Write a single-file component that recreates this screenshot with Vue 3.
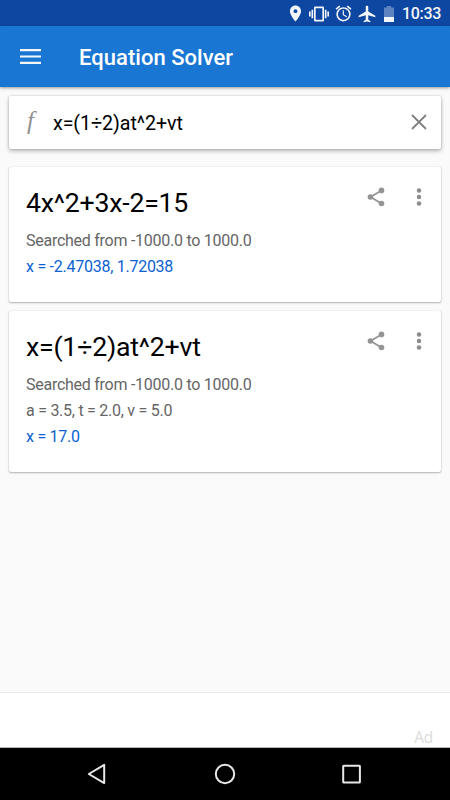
<script setup>
const results = [
  {
    equation: '4x^2+3x-2=15',
    lines: ['Searched from -1000.0 to 1000.0'],
    answer: 'x = -2.47038, 1.72038',
  },
  {
    equation: 'x=(1÷2)at^2+vt',
    lines: ['Searched from -1000.0 to 1000.0', 'a = 3.5, t = 2.0, v = 5.0'],
    answer: 'x = 17.0',
  },
]
</script>

<template>
  <div class="screen">
    <div class="status">
      <svg class="pin" viewBox="0 0 24 24"><path d="M12 2C8.13 2 5 5.13 5 9c0 5.25 7 13 7 13s7-7.75 7-13c0-3.87-3.13-7-7-7zm0 9.5a2.5 2.5 0 0 1 0-5 2.5 2.5 0 0 1 0 5z" /></svg>
      <svg class="vibrate" viewBox="0 0 24 24"><path d="M0 15h2V9H0v6zm3 2h2V7H3v10zm19-8v6h2V9h-2zm-3 8h2V7h-2v10zM16.500 3h-9C6.670 3 6 3.670 6 4.500v15c0 .83.67 1.500 1.500 1.500h9c.83 0 1.500-.67 1.500-1.500v-15c0-.83-.67-1.500-1.500-1.500zM16 19H8V5h8v14z" /></svg>
      <svg class="alarm" viewBox="0 0 24 24"><path d="M22 5.720l-4.600-3.860-1.290 1.530 4.600 3.860L22 5.720zM7.880 3.390L6.600 1.860 2 5.710l1.290 1.530 4.590-3.850zM12.500 8H11v6l4.750 2.850.75-1.230-4-2.370V8zM12 4c-4.970 0-9 4.030-9 9s4.020 9 9 9a9 9 0 0 0 0-18zm0 16c-3.870 0-7-3.130-7-7s3.130-7 7-7 7 3.130 7 7-3.130 7-7 7z" /></svg>
      <svg class="plane" viewBox="0 0 24 24"><path d="M22 16v-2l-8.500-5V3.500C13.500 2.670 12.830 2 12 2s-1.500.67-1.500 1.500V9L2 14v2l8.500-2.500V19L8 20.500V22l4-1 4 1v-1.500L13.500 19v-5.500L22 16z" /></svg>
      <svg class="battery" viewBox="0 0 12 18"><path fill-opacity=".35" d="M1 2.500h2.800V1h4.400v1.500H11V12H1z" /><path d="M1 12h10v5H1z" /></svg>
      <span class="clock">10:33</span>
    </div>

    <header class="appbar">
      <svg class="menu" viewBox="0 0 22 16"><path d="M0 0h21v2.200H0zM0 6.400h21v2.200H0zM0 12.800h21V15H0z" /></svg>
      <h1>Equation Solver</h1>
    </header>

    <main>
      <div class="search">
        <span class="fn">f</span>
        <span class="query">x=(1÷2)at^2+vt</span>
        <svg class="close" viewBox="0 0 16 16"><path d="M1 1l14 14M15 1L1 15" /></svg>
      </div>

      <article v-for="r in results" :key="r.equation" class="card">
        <div class="body">
          <h2>{{ r.equation }}</h2>
          <p v-for="l in r.lines" :key="l">{{ l }}</p>
          <p class="answer">{{ r.answer }}</p>
        </div>
        <div class="actions">
          <svg class="share" viewBox="0 0 18 20"><path d="M14.500 3.500L3.500 10l11 6.500" /><circle cx="3.400" cy="10" r="2.800" /><circle cx="14.500" cy="3.400" r="2.800" /><circle cx="14.500" cy="16.500" r="2.800" /></svg>
          <svg class="more" viewBox="0 0 6 20"><circle cx="3" cy="3.400" r="2.250" /><circle cx="3" cy="10" r="2.250" /><circle cx="3" cy="16.600" r="2.250" /></svg>
        </div>
      </article>
    </main>

    <div class="ad">Ad</div>

    <nav>
      <svg viewBox="0 0 24 24"><path d="M18.200 2.900v18.200L2.800 12z" /></svg>
      <svg viewBox="0 0 24 24"><circle cx="12" cy="12" r="9.200" /></svg>
      <svg viewBox="0 0 24 24"><rect x="3.200" y="3.800" width="16.700" height="16.700" rx=".5" /></svg>
    </nav>
  </div>
</template>

<style>
body {
  margin: 0;
}
</style>

<style scoped>
.screen {
  width: 450px;
  height: 800px;
  display: flex;
  flex-direction: column;
  background: #fafafa;
  font-family: Roboto, sans-serif;
  overflow: hidden;
}
svg {
  display: block;
  flex: none;
}
.status {
  height: 26px;
  flex: none;
  box-sizing: border-box;
  padding: 1px 9px 0 0;
  display: flex;
  align-items: center;
  justify-content: flex-end;
  background: #0d47a1;
  color: #f3f6fb;
}
.status svg {
  fill: #f3f6fb;
}
.pin {
  width: 19px;
  height: 19px;
  margin-right: 4px;
}
.vibrate {
  width: 20px;
  height: 20px;
  margin-right: 5px;
}
.alarm {
  width: 19px;
  height: 19px;
  margin-right: 4px;
}
.plane {
  width: 20px;
  height: 20px;
  margin-right: 6px;
}
.battery {
  width: 12px;
  height: 18px;
  margin-right: 7px;
}
.clock {
  width: 39px;
  white-space: nowrap;
  font-size: 16px;
  font-weight: 500;
  letter-spacing: -0.3px;
  line-height: 26px;
}
.appbar {
  height: 61px;
  flex: none;
  display: flex;
  align-items: center;
  padding-left: 20px;
  background: #1976d2;
  box-shadow: 0 1px 3px rgba(0, 0, 0, 0.4);
  z-index: 1;
}
.menu {
  width: 22px;
  height: 16px;
  fill: #f2f7fc;
}
h1 {
  margin: 0 0 0 37px;
  font-size: 22px;
  font-weight: 500;
  letter-spacing: 0.03px;
  line-height: 26px;
  padding-top: 2px;
  color: #fff;
}
main {
  flex: 1;
  padding: 9px 9px 0;
}
.search,
.card {
  box-sizing: border-box;
  background: #fff;
  border-radius: 2px;
  display: flex;
}
.search {
  height: 53px;
  align-items: center;
  padding: 0 14px;
  margin-bottom: 18px;
  box-shadow: 0 0 2px rgba(0, 0, 0, 0.2), 0 2px 4px rgba(0, 0, 0, 0.28);
}
.fn {
  width: 30px;
  box-sizing: border-box;
  padding: 0 0 4px 4px;
  font: italic 25px/48px 'Liberation Serif', serif;
  color: #909090;
}
.query {
  flex: 1;
  padding-top: 2px;
  font-size: 19.700px;
  letter-spacing: -0.1px;
  line-height: 51px;
  color: #000;
}
.close {
  width: 16px;
  height: 16px;
  margin-bottom: 1px;
  fill: none;
  stroke: #808080;
  stroke-width: 1.800;
}
.card {
  justify-content: space-between;
  padding: 20px 19px 22px 17px;
  margin-bottom: 9px;
  box-shadow: 0 0 1px rgba(0, 0, 0, 0.25), 0 1px 2px rgba(0, 0, 0, 0.28);
}
h2 {
  margin: 0 0 8px;
  font-size: 26.700px;
  font-weight: 400;
  letter-spacing: -0.22px;
  line-height: 33px;
  color: #000;
}
p {
  margin: 0;
  font-size: 16px;
  letter-spacing: -0.26px;
  line-height: 26px;
  color: #656565;
}
.answer {
  color: #0b61d1;
}
.actions {
  display: flex;
  gap: 31px;
}
.share {
  width: 18px;
  height: 20px;
  fill: #949494;
}
.share path {
  fill: none;
  stroke: #949494;
  stroke-width: 1.700;
}
.more {
  width: 6px;
  height: 20px;
  fill: #8c8c8c;
}
.ad {
  height: 56px;
  flex: none;
  box-sizing: border-box;
  border-top: 1px solid #ebebeb;
  border-bottom: 1px solid #b8b8b8;
  background: #fff;
  padding: 34px 17px 0 0;
  text-align: right;
  font-family: 'Open Sans', sans-serif;
  font-size: 15.500px;
  letter-spacing: -0.3px;
  line-height: 20px;
  color: #dcdcdc;
}
nav {
  height: 52px;
  flex: none;
  display: flex;
  align-items: center;
  justify-content: space-between;
  padding: 0 86px;
  box-sizing: border-box;
  background: #000;
}
nav svg {
  width: 24px;
  height: 24px;
  fill: none;
  stroke: #e8e8e8;
  stroke-width: 2;
  stroke-linejoin: round;
}
</style>
